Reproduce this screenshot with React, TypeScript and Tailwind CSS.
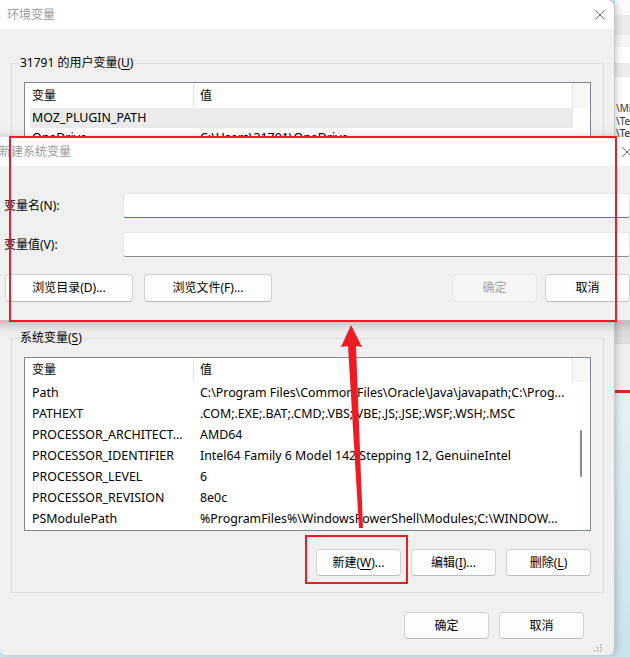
import type { ReactNode } from 'react';

const FONT = "font-['Noto_Sans','Noto_Sans_CJK_SC',sans-serif]";

type Row = [string, string];

const userRows: Row[] = [
  ['MOZ_PLUGIN_PATH', ''],
  ['OneDrive', 'C:\\Users\\31791\\OneDrive'],
  ['Path', 'C:\\Users\\31791\\AppData\\Local\\Microsoft\\WindowsApps;'],
  ['TEMP', 'C:\\Users\\31791\\AppData\\Local\\Temp'],
  ['TMP', 'C:\\Users\\31791\\AppData\\Local\\Temp'],
];

const systemRows: Row[] = [
  ['Path', 'C:\\Program Files\\Common Files\\Oracle\\Java\\javapath;C:\\Prog...'],
  ['PATHEXT', '.COM;.EXE;.BAT;.CMD;.VBS;.VBE;.JS;.JSE;.WSF;.WSH;.MSC'],
  ['PROCESSOR_ARCHITECT...', 'AMD64'],
  ['PROCESSOR_IDENTIFIER', 'Intel64 Family 6 Model 142 Stepping 12, GenuineIntel'],
  ['PROCESSOR_LEVEL', '6'],
  ['PROCESSOR_REVISION', '8e0c'],
  ['PSModulePath', '%ProgramFiles%\\WindowsPowerShell\\Modules;C:\\WINDOW...'],
];

function CloseIcon() {
  return (
    <svg viewBox="0 0 10 10" className="w-[10px] h-[10px] text-[#707070]" fill="none" stroke="currentColor" strokeWidth="1">
      <path d="M0.5 0.5l9 9M9.5 0.5l-9 9" />
    </svg>
  );
}

function Btn({ children, className = '', disabled = false }: { children: ReactNode; className?: string; disabled?: boolean }) {
  return (
    <div
      className={
        'h-full flex items-center justify-center rounded-[4px] border text-[12px] ' +
        (disabled
          ? 'bg-[#f6f6f6] border-[#e6e6e6] text-[#a3a3a3] '
          : 'bg-[#fdfdfd] border-[#d2d2d2] border-b-[#bdbdbd] text-black ') +
        className
      }
    >
      {children}
    </div>
  );
}

function Key({ k }: { k: string }) {
  return <span className="underline underline-offset-[2px]">{k}</span>;
}

function VarList({ rows, headerH, rowH, height, selectFirst, thumb }: {
  rows: Row[];
  headerH: string;
  rowH: string;
  height: string;
  selectFirst?: boolean;
  thumb?: boolean;
}) {
  return (
    <div className={`w-[567px] ${height} shrink-0 bg-white border border-[#82868d] flex flex-col overflow-hidden text-[12.4px]`}>
      <div className={`${headerH} shrink-0 flex text-[12px]`}>
        <div className="w-[169px] border-r border-[#e5e5e5] pl-[7px] flex items-center">变量</div>
        <div className="flex-1 border-r border-[#e5e5e5] pl-[6px] flex items-center">值</div>
        <div className="w-[17px] bg-[#f7f7f7]" />
      </div>
      <div className="flex-1 flex">
        <div className="flex-1 flex flex-col">
          {rows.map(([name, value], i) => (
            <div
              key={name}
              className={`${rowH} shrink-0 flex items-center pt-[1px] whitespace-nowrap overflow-hidden ` + (selectFirst && i === 0 ? 'bg-[#ebebeb] ml-[5px]' : '')}
            >
              <div className={(selectFirst && i === 0 ? 'w-[164px] pl-[2px]' : 'w-[169px] pl-[7px]') + ' shrink-0 overflow-hidden'}>{name}</div>
              <div className="pl-[6px] overflow-hidden">{value}</div>
            </div>
          ))}
        </div>
        <div className="w-[17px] flex flex-col pt-[48px] pl-[7px]">
          {thumb && <div className="w-[2px] h-[47px] rounded-full bg-[#8a8a8a]" />}
        </div>
      </div>
    </div>
  );
}

function MainWindow() {
  return (
    <div className="w-[615px] h-[655px] shrink-0 flex flex-col bg-[#f0f0f0] rounded-tr-[8px] rounded-b-[6px] overflow-hidden border-r border-[#c6c6c6] shadow-[2px_0_6px_rgba(0,0,0,0.18)] z-10">
      <div className="h-[29px] shrink-0 bg-white flex items-center justify-between pl-[7px] pr-[9px]">
        <span className="text-[12px] text-[#9c9c9c]">环境变量</span>
        <CloseIcon />
      </div>
      <div className="flex-1 flex flex-col pl-[11px] pr-[12px]">
        <fieldset className="mt-[26px] h-[264px] border border-[#dcdcdc] pl-[12px] pr-[12px] overflow-hidden">
          <legend className="ml-[-6px] px-[2px] text-[12px] leading-[16px]">
            31791 的用户变量(<Key k="U" />)
          </legend>
          <div className="mt-[11px]">
            <VarList rows={userRows} headerH="h-[25px]" rowH="h-[20px]" height="h-[210px]" selectFirst />
          </div>
        </fieldset>

        <fieldset className="mt-[11px] border border-[#dcdcdc] pl-[12px] pr-[12px] pb-[16px]">
          <legend className="ml-[-6px] px-[2px] text-[12px] leading-[16px]">
            系统变量(<Key k="S" />)
          </legend>
          <div className="mt-[11px]">
            <VarList rows={systemRows} headerH="h-[24px]" rowH="h-[21px]" height="h-[174px]" thumb />
          </div>
          <div className="mt-[18px] h-[27px] flex justify-end gap-[10px]">
            <Btn className="w-[85px]">新建(<Key k="W" />)...</Btn>
            <Btn className="w-[85px]">编辑(<Key k="I" />)...</Btn>
            <Btn className="w-[85px]">删除(<Key k="L" />)</Btn>
          </div>
        </fieldset>

        <div className="mt-[19px] h-[27px] flex justify-end gap-[10px] mr-[18px]">
          <Btn className="w-[85px]">确定</Btn>
          <Btn className="w-[85px]">取消</Btn>
        </div>
        <div className="flex-1 flex items-end justify-end pb-[3px]">
          <svg viewBox="0 0 8 8" className="w-[8px] h-[8px]" fill="#a8a8a8">
            <rect x="6" y="0" width="1.5" height="1.5" />
            <rect x="3" y="3" width="1.5" height="1.5" />
            <rect x="6" y="3" width="1.5" height="1.5" />
            <rect x="0" y="6" width="1.5" height="1.5" />
            <rect x="3" y="6" width="1.5" height="1.5" />
            <rect x="6" y="6" width="1.5" height="1.5" />
          </svg>
        </div>
      </div>
    </div>
  );
}

function BackStrip() {
  return (
    <div className="flex-1 flex flex-col overflow-hidden">
      <div className="h-[15px] shrink-0 bg-[#fafafa]" />
      <div className="h-[20px] shrink-0 bg-[#ebebeb]" />
      <div className="h-[12px] shrink-0 bg-[#f5f5f5]" />
      <div className="h-[16px] shrink-0 bg-white" />
      <div className="h-[14px] shrink-0 bg-[#ececec]" />
      <div className="h-[25px] shrink-0 bg-white" />
      <div className="h-[35px] shrink-0 bg-white flex flex-col text-[10px] leading-[12.5px] text-[#333] whitespace-nowrap pl-[1px]">
        <span>\Mi</span>
        <span>\Te</span>
        <span>\Te</span>
      </div>
      <div className="h-[185px] shrink-0 bg-[#f0f0f0]" />
      <div className="h-[21px] shrink-0 bg-[#dedede]" />
      <div className="h-[47px] shrink-0 bg-[#efefef] border-t border-[#d8d8d8]" />
      <div className="h-[3px] shrink-0 bg-[#ed1c24]" />
      <div className="flex-1 bg-gradient-to-b from-[#e4f2f6] to-[#c8e3eb]" />
    </div>
  );
}

function NewVarDialog() {
  return (
    <div className="absolute left-[-8px] top-[137px] w-[650px] h-[183px] flex flex-col bg-[#f0f0f0] shadow-[0_3px_12px_rgba(0,0,0,0.3)] z-20">
      <div className="h-[29px] shrink-0 bg-white flex items-center justify-between pl-[7px] pr-[10px]">
        <span className="text-[12px] text-[#9c9c9c]">新建系统变量</span>
        <CloseIcon />
      </div>
      <div className="flex-1 flex flex-col pl-[12px] pr-[12px] pt-[27px] text-[12px]">
        <div className="h-[25px] flex items-center">
          <span className="w-[119px] shrink-0">变量名(N):</span>
          <div className="flex-1 h-full bg-white border border-[#e6e6e6] border-b-[#5f7398] rounded-[3px]" />
        </div>
        <div className="h-[25px] mt-[14px] flex items-center">
          <span className="w-[119px] shrink-0">变量值(V):</span>
          <div className="flex-1 h-full bg-white border border-[#e6e6e6] border-b-[#8c8c8c] rounded-[3px]" />
        </div>
        <div className="h-[28px] mt-[17px] flex">
          <Btn className="w-[128px] ml-[1px]">浏览目录(D)...</Btn>
          <Btn className="w-[128px] ml-[11px]">浏览文件(F)...</Btn>
          <div className="flex-1" />
          <Btn className="w-[85px]" disabled>确定</Btn>
          <Btn className="w-[85px] ml-[8px]">取消</Btn>
        </div>
      </div>
    </div>
  );
}

function Highlights() {
  return (
    <>
      <div className="absolute left-[9px] top-[136px] w-[608px] h-[186px] border-2 border-[#ed1c24] z-30 pointer-events-none" />
      <div className="absolute left-[305px] top-[535px] w-[103px] h-[49px] border-2 border-[#ed1c24] z-30 pointer-events-none" />
      <svg className="absolute left-[336px] top-[320px] w-[32px] h-[212px] z-30 pointer-events-none" viewBox="336 320 32 212">
        <polygon points="351,325 341,347 348,346 359,528 363,528 356,346 362,347" fill="#ed1c24" />
      </svg>
    </>
  );
}

export default function App() {
  return (
    <div className={`relative w-[630px] h-[657px] overflow-hidden flex bg-[#cfe6ec] text-black ${FONT}`}>
      <MainWindow />
      <BackStrip />
      <NewVarDialog />
      <Highlights />
    </div>
  );
}
